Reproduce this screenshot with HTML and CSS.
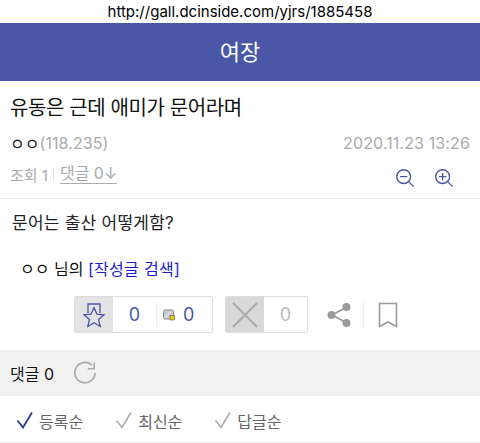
FILE: index.html
```html
<!DOCTYPE html>
<html lang="ko">
<head>
<meta charset="utf-8">
<title>여장</title>
<link rel="stylesheet" href="styles.css">
</head>
<body>
<div class="url">http://gall.dcinside.com/yjrs/1885458</div>
<header class="top">여장</header>
<section class="post-head">
  <h1 class="title">유동은 근데 애미가 문어라며</h1>
  <div class="meta">
    <div class="author"><span class="nick">ㅇㅇ</span><span class="ip">(118.235)</span></div>
    <div class="date">2020.11.23 13:26</div>
  </div>
  <div class="stats">
    <div class="counts"><span>조회 1</span><i class="sep"></i><span class="link">댓글 0↓</span></div>
    <div class="zooms">
      <svg class="zoom" viewBox="0 0 22 22" width="20" height="20"><circle cx="9.5" cy="9.5" r="7.6"/><path d="M5.5 9.5h8M15 15l5.5 5.5"/></svg>
      <svg class="zoom" viewBox="0 0 22 22" width="20" height="20"><circle cx="9.5" cy="9.5" r="7.6"/><path d="M5.5 9.5h8M9.5 5.5v8M15 15l5.5 5.5"/></svg>
    </div>
  </div>
</section>
<section class="body">
  <p class="text">문어는 출산 어떻게함?</p>
  <p class="writer"><span class="nick">ㅇㅇ</span> 님의 <a class="search">[작성글 검색]</a></p>
  <div class="actions">
    <div class="vote up">
      <div class="vote-btn">
        <svg viewBox="0 0 24 26" width="24" height="26"><path class="star" d="M6 11V2h12v9M12 5.5l2.9 6.6 7.1.7-5.4 4.7 1.6 7-6.2-3.7-6.2 3.7 1.6-7L2 12.800l7.100-.7z"/></svg>
      </div>
      <div class="vote-num">0</div>
      <div class="vote-fix">
        <svg viewBox="0 0 12 12" width="12" height="12"><rect x="0.500" y="1" width="10" height="9" rx="1.500" class="card"/><path class="card-line" d="M1.500 8.500 8 3"/><rect x="7" y="6.500" width="4.500" height="4.500" class="dot"/></svg>
        <span>0</span>
      </div>
    </div>
    <div class="vote down">
      <div class="vote-btn">
        <svg viewBox="0 0 28 28" width="28" height="28"><path class="x" d="M2 2l24 24M26 2 2 26"/></svg>
      </div>
      <div class="vote-num">0</div>
    </div>
    <svg class="share" viewBox="0 0 26 26" width="26" height="26"><path d="M6 13 21 5M6 13l15 8"/><circle cx="5.500" cy="13" r="4"/><circle cx="20.500" cy="5" r="4"/><circle cx="20.500" cy="21" r="4"/></svg>
    <i class="divider"></i>
    <svg class="mark" viewBox="0 0 20 26" width="20" height="26"><path d="M1.500 1.500h17v23L10 20l-8.500 4.500z"/></svg>
  </div>
</section>
<section class="comment-bar">
  <span>댓글 0</span>
  <svg class="refresh" viewBox="0 0 26 26" width="24" height="24"><path d="M20.500 4.500A11 11 0 1 0 24 13"/><path class="tip" d="M23 1.500v7h-7"/></svg>
</section>
<nav class="sort">
  <span class="item on"><svg viewBox="0 0 18 18" width="18" height="18"><path d="M1.500 9.500 7 16.500 16 1.500"/></svg>등록순</span>
  <span class="item"><svg viewBox="0 0 18 18" width="18" height="18"><path d="M1.500 9.500 7 16.500 16 1.500"/></svg>최신순</span>
  <span class="item"><svg viewBox="0 0 18 18" width="18" height="18"><path d="M1.500 9.500 7 16.500 16 1.500"/></svg>답글순</span>
</nav>
</body>
</html>
```
FILE: styles.css
```css
* { box-sizing: border-box; }
html, body { margin: 0; padding: 0; height: 443px; overflow: hidden; }
body { width: 480px; background: #fff; color: #111; font-family: Inter, "Noto Sans CJK KR", sans-serif; }
p, h1 { margin: 0; font-weight: 400; }
.url { height: 23px; line-height: 24px; text-align: center; font-size: 15px; color: #000; }
.top { height: 58px; background: #4a57a6; color: #fff; font-size: 22px; line-height: 58px; text-align: center; font-weight: 400; }
.post-head { padding: 0 10px; border-bottom: 1px solid #eee; height: 118px; }
.title { font-size: 20px; line-height: 28px; padding-top: 13px; height: 41px; color: #111; letter-spacing: -0.4px; }
.meta { display: flex; justify-content: space-between; align-items: center; margin-top: 10px; height: 22px; font-size: 16px; color: #aaa; }
.author { display: flex; align-items: center; }
.nick { color: #111; font-size: 16px; }
.date { font-size: 16px; letter-spacing: 0.12px; }
.ip { letter-spacing: 0.1px; }
.stats { display: flex; justify-content: space-between; align-items: center; margin-top: 8px; height: 24px; }
.counts { display: flex; align-items: center; font-size: 15px; color: #aaa; }
.sep { width: 1px; height: 14px; background: #e4e4e4; margin: 0 6px 0 5px; }
.link { border-bottom: 1px solid #aaa; line-height: 19px; font-size: 16px; }
.zooms { display: flex; gap: 19px; margin: 8px 16px 0 0; }
.zoom { fill: none; stroke: #4a57a6; stroke-width: 1.500; }
.body { height: 151px; }
.text { font-size: 17px; line-height: 24px; padding: 12px 0 0 12px; height: 50px; color: #222; letter-spacing: 0.25px; }
.writer { font-size: 16px; line-height: 22px; padding: 9px 0 0 20px; height: 39px; }
.search { color: #1c1cd6; letter-spacing: 0.3px; }
.actions { display: flex; align-items: center; margin: 8px 0 0 74px; height: 37px; }
.vote { display: flex; align-items: center; height: 37px; border: 1px solid #ddd; border-radius: 2px; }
.up { width: 139px; }
.down { width: 83px; margin-left: 12px; }
.vote-btn { display: flex; align-items: center; justify-content: center; width: 38px; height: 100%; background: #e3e3e3; }
.down .vote-btn { background: #d9d9d9; }
.vote-num { flex: 1; text-align: center; font-size: 18px; color: #4a57a6; }
.down .vote-num { color: #bbb; }
.star { fill: none; stroke: #4a57a6; stroke-width: 1.300; }
.vote-fix { display: flex; align-items: center; gap: 8px; width: 56px; height: 24px; padding-left: 6px; border-left: 1px solid #eee; font-size: 18px; color: #4a57a6; }
.card { fill: #ccc; stroke: #888; stroke-width: 1; }
.card-line { fill: none; stroke: #eee; stroke-width: 1; }
.dot { fill: #e8c91c; stroke: #555; stroke-width: 0.600; }
.x { fill: none; stroke: #aaa; stroke-width: 2; }
.share { margin-left: 18px; fill: #9a9a9a; stroke: #9a9a9a; stroke-width: 1.500; }
.share circle { stroke: none; }
.divider { width: 1px; height: 28px; background: #eee; margin-left: 11px; }
.mark { margin-left: 14px; fill: none; stroke: #9a9a9a; stroke-width: 1.600; }
.comment-bar { display: flex; align-items: center; gap: 19px; height: 46px; padding: 0 0 1px 10px; background: #f1f1f1; font-size: 16px; color: #111; }
.refresh { fill: none; stroke: #aaa; stroke-width: 1.800; }
.tip { stroke-width: 1.600; }
.sort { display: flex; gap: 32px; height: 47px; padding: 3px 0 0 16px; border-bottom: 1px solid #eee; align-items: center; font-size: 16px; color: #666; }
.item { display: flex; align-items: center; gap: 5px; }
.item svg { fill: none; stroke: #aaa; stroke-width: 1.500; margin-bottom: 2px; }
.on svg { stroke: #2f3a86; stroke-width: 1.800; }
```
